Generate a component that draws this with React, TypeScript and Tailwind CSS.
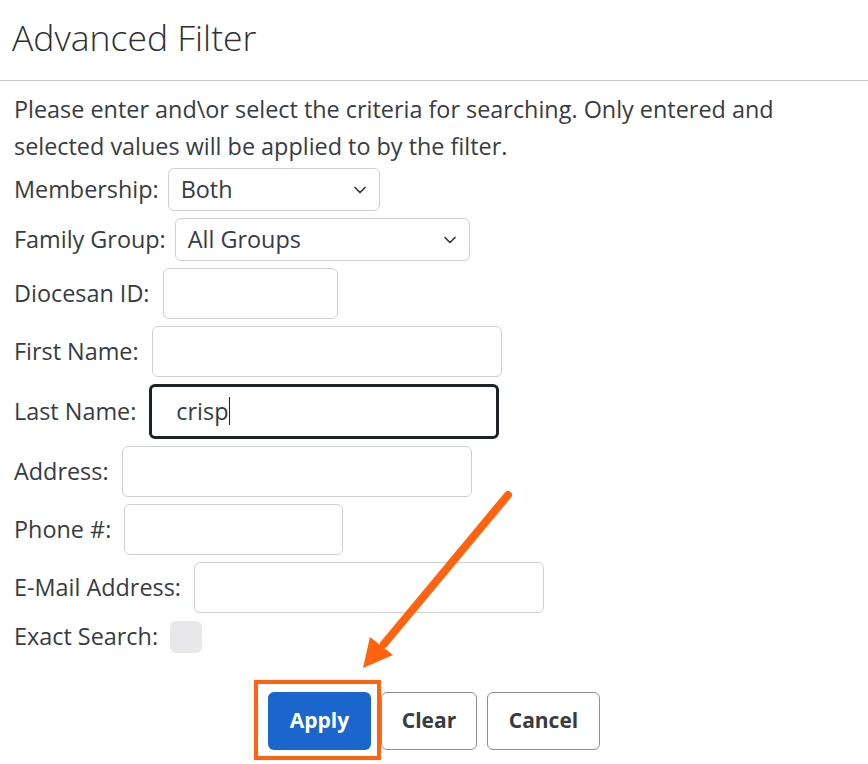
import { ChevronDown } from "lucide-react";

const font = { fontFamily: '"Open Sans", "Noto Sans", sans-serif' };

function Field({ label, width, value, focused }: { label: string; width: string; value?: string; focused?: boolean }) {
  return (
    <div className="flex items-center gap-[13px]">
      <span>{label}</span>
      <div
        className={`${width} rounded-md bg-white flex items-center px-6 ${
          focused ? "h-[55px] border-[3px] border-[#1c2228]" : "h-[51px] border border-[#cfcfcf]"
        }`}
      >
        {value && (
          <span className="flex items-center">
            {value}
            <span className="inline-block w-px h-[28px] bg-[#222] ml-px" />
          </span>
        )}
      </div>
    </div>
  );
}

function Select({ label, value, width }: { label: string; value: string; width: string }) {
  return (
    <div className="flex items-center gap-[9px]">
      <span>{label}</span>
      <div className={`h-[43px] ${width} rounded-md border border-[#cfcfcf] flex items-center justify-between pl-3 pr-[9px]`}>
        <span>{value}</span>
        <ChevronDown size={20} strokeWidth={2} className="text-[#333]" />
      </div>
    </div>
  );
}

export default function App() {
  return (
    <div className="relative w-[868px] h-[764px] bg-white text-[#383c42] overflow-hidden" style={font}>
      <div className="h-[81px] border-b border-[#c8c8c8] px-3 flex items-center">
        <h1 className="text-[35.5px] font-light text-[#2b2f33] -mt-1">Advanced Filter</h1>
      </div>

      <div className="px-[14px] pt-[10px] text-[23.4px]">
        <p className="leading-[37px] mb-[3px] w-[800px]">
          Please enter and\or select the criteria for searching. Only entered and selected values will be applied to by the filter.
        </p>

        <div className="flex flex-col gap-[7px]">
          <Select label="Membership:" value="Both" width="w-[212px]" />
          <Select label="Family Group:" value="All Groups" width="w-[295px]" />
          <Field label="Diocesan ID:" width="w-[175px]" />
          <Field label="First Name:" width="w-[350px]" />
          <Field label="Last Name:" width="w-[350px]" value="crisp" focused />
          <Field label="Address:" width="w-[350px]" />
          <Field label="Phone #:" width="w-[219px]" />
          <Field label="E-Mail Address:" width="w-[350px]" />
          <div className="flex items-center gap-3 h-[32px] mt-[1px]">
            <span>Exact Search:</span>
            <div className="w-[32px] h-[32px] rounded-md bg-[#e8e8ea]" />
          </div>
        </div>

        <div className="flex justify-center gap-[10px] mt-[39px] text-[21px] font-bold">
          <button className="h-[58px] w-[103px] rounded-md bg-[#1b66cc] text-white">Apply</button>
          <button className="h-[58px] w-[96px] rounded-md border border-[#8c9096] text-[#383c42]">Clear</button>
          <button className="h-[58px] w-[113px] rounded-md border border-[#8c9096] text-[#383c42]">Cancel</button>
        </div>
      </div>

      <div className="absolute left-[254px] top-[680px] w-[127px] h-[80px] border-4 border-[#ff6310] pointer-events-none" />

      <svg className="absolute left-0 top-0 pointer-events-none" width="868" height="764">
        <line x1="508" y1="495" x2="384" y2="644" stroke="#ff6310" strokeWidth="8" strokeLinecap="round" />
        <polygon points="363,668 370,637 393,655" fill="#ff6310" />
      </svg>
    </div>
  );
}
